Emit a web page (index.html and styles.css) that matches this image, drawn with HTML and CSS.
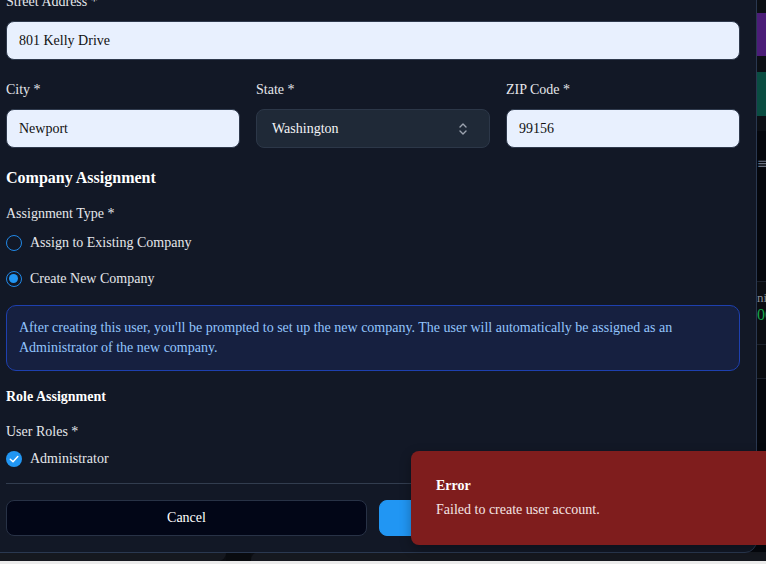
FILE: index.html
```html
<!DOCTYPE html>
<html lang="en">
<head>
<meta charset="utf-8">
<title>Create User</title>
<link rel="stylesheet" href="styles.css">
</head>
<body>
<div class="page">
  <div class="page-main">
    <div class="side">
      <div class="side-gap s1"></div>
      <div class="side-card purple"></div>
      <div class="side-gap s2"></div>
      <div class="side-card teal"></div>
      <div class="side-gap s3"></div>
      <div class="side-panel">
        <div class="side-menu">≡</div>
        <div class="side-row">
          <span class="side-label">ni</span>
          <span class="side-value">00</span>
        </div>
        <div class="side-row2"></div>
      </div>
    </div>
  </div>
  <div class="page-bottom">
    <div class="pb-a"></div>
    <div class="pb-b"></div>
    <div class="pb-c"></div>
  </div>
</div>

<div class="modal">
  <div class="field">
    <label class="label">Street Address *</label>
    <input class="input" type="text" value="801 Kelly Drive">
  </div>

  <div class="grid3">
    <div class="field">
      <label class="label">City *</label>
      <input class="input" type="text" value="Newport">
    </div>
    <div class="field">
      <label class="label">State *</label>
      <div class="select">
        <span>Washington</span>
        <svg class="chev" width="10" height="14" viewBox="0 0 10 14" fill="none" stroke="#9ca3af" stroke-width="1.4" stroke-linecap="round" stroke-linejoin="round"><path d="M2 5 L5 2 L8 5"/><path d="M2 9 L5 12 L8 9"/></svg>
      </div>
    </div>
    <div class="field">
      <label class="label">ZIP Code *</label>
      <input class="input" type="text" value="99156">
    </div>
  </div>

  <h3 class="section-title">Company Assignment</h3>
  <div class="label sub-label">Assignment Type *</div>
  <div class="option first"><span class="radio"></span><span>Assign to Existing Company</span></div>
  <div class="option second"><span class="radio checked"></span><span>Create New Company</span></div>

  <div class="info">After creating this user, you'll be prompted to set up the new company. The user will automatically be assigned as an Administrator of the new company.</div>

  <h4 class="section-title small">Role Assignment</h4>
  <div class="label sub-label2">User Roles *</div>
  <div class="option third">
    <span class="check"><svg width="16" height="16" viewBox="0 0 16 16" fill="none" stroke="#fff" stroke-width="1.5" stroke-linecap="round" stroke-linejoin="round"><path d="M4.3 8.3 L7 10.8 L11.8 5.6"/></svg></span>
    <span>Administrator</span>
  </div>

  <div class="divider"></div>

  <div class="actions">
    <button class="btn cancel">Cancel</button>
    <button class="btn primary">Create User</button>
  </div>
</div>

<div class="toast">
  <div class="toast-title">Error</div>
  <div class="toast-desc">Failed to create user account.</div>
</div>
</body>
</html>
```

FILE: styles.css
```css
* { box-sizing: border-box; }

html, body {
  margin: 0;
  padding: 0;
}

body {
  width: 766px;
  height: 564px;
  overflow: hidden;
  background: #ebebeb;
  font-family: "Liberation Serif", "Times New Roman", serif;
  font-size: 14px;
  line-height: 20px;
  position: relative;
}

/* background page */
.page {
  height: 561px;
  background: #05070d;
  display: flex;
  flex-direction: column;
}

.page-main {
  flex: 1;
  display: flex;
  justify-content: flex-end;
}

.side {
  width: 220px;
  display: flex;
  flex-direction: column;
}

.side-gap { background: #0c0f15; }
.s1 { height: 13px; }
.s2 { height: 16px; }
.s3 { height: 15px; }
.side-card { height: 43px; }
.purple { background: #4b1d78; }
.teal { background: #0a4d42; height: 44px; }

.side-panel {
  flex: 1;
  background: #05070d;
  display: flex;
  flex-direction: column;
  align-items: flex-end;
}

.side-menu {
  color: #6b7280;
  font-family: "DejaVu Sans", sans-serif;
  font-size: 14px;
  line-height: 20px;
  margin-top: 22px;
  width: 9px;
  overflow: hidden;
}

.side-row {
  margin-top: 108px;
  width: 100%;
  height: 64px;
  border-top: 1px solid #1c212b;
  border-bottom: 1px solid #1c212b;
  background: #0b0d12;
  display: flex;
  flex-direction: column;
  align-items: flex-start;
  padding-top: 8px;
  padding-left: 211px;
}

.side-label {
  color: #8a8f98;
  font-family: "Liberation Serif", serif;
  font-size: 13px;
  line-height: 16px;
  white-space: nowrap;
}

.side-value {
  color: #16a34a;
  font-family: "Liberation Serif", serif;
  font-size: 16px;
  line-height: 18px;
}

.side-row2 {
  width: 100%;
  height: 34px;
  border-bottom: 1px solid #1c212b;
  background: #0a0c10;
}

.page-bottom {
  height: 9px;
  display: flex;
  background: #0b0d12;
}

.pb-a { width: 226px; background: #15181f; border-radius: 0 0 8px 0; }
.pb-b { width: 25px; background: #090b0f; }
.pb-c { flex: 1; background: #15181f; border-radius: 8px 0 0 0; }

/* modal */
.modal {
  position: absolute;
  left: -20px;
  top: -30px;
  width: 777px;
  background: #121826;
  border: 1px solid #2a3850;
  border-radius: 12px;
  padding: 21px 16px 16px 25px;
  color: #e5e7eb;
}

.field {
  display: flex;
  flex-direction: column;
  gap: 9px;
}

.label {
  display: block;
  color: #e5e7eb;
  font-size: 14px;
  line-height: 20px;
}

.input {
  height: 39px;
  border: 1px solid #2f3a4d;
  border-radius: 8px;
  background: #e8f0fe;
  color: #111111;
  font-family: "Liberation Serif", "Times New Roman", serif;
  font-size: 14px;
  padding: 0 12px;
  outline: none;
  width: 100%;
}

.grid3 {
  display: grid;
  grid-template-columns: 1fr 1fr 1fr;
  gap: 16px;
  margin-top: 20px;
}

.select {
  height: 39px;
  border: 1px solid #2c3748;
  border-radius: 8px;
  background: #1f2937;
  color: #f3f4f6;
  display: flex;
  align-items: center;
  justify-content: space-between;
  padding: 0 21px 0 15px;
}

.chev { display: block; }

.section-title {
  margin: 18px 0 0;
  font-size: 16px;
  line-height: 24px;
  font-weight: bold;
  color: #ffffff;
}

.section-title.small {
  margin-top: 16px;
  font-size: 14px;
  line-height: 20px;
}

.sub-label { margin-top: 14px; }
.sub-label2 { margin-top: 15px; }

.option {
  display: flex;
  align-items: center;
  gap: 8px;
  height: 20px;
  color: #e5e7eb;
}

.option.first { margin-top: 9px; }
.option.second { margin-top: 16px; }
.option.third { margin-top: 7px; }

.radio {
  width: 16px;
  height: 16px;
  border-radius: 50%;
  border: 1.5px solid #2188e6;
  flex: none;
  position: relative;
}

.radio.checked::after {
  content: "";
  position: absolute;
  left: 2px;
  top: 2px;
  width: 9px;
  height: 9px;
  border-radius: 50%;
  background: #2196f3;
}

.check {
  width: 16px;
  height: 16px;
  border-radius: 50%;
  background: #2196f3;
  flex: none;
  display: block;
}

.check svg { display: block; }

.info {
  margin-top: 16px;
  border: 1px solid #1e40af;
  background: #162040;
  border-radius: 10px;
  padding: 12px;
  color: #93c5fd;
  font-size: 14px;
  line-height: 20px;
}

.divider {
  margin-top: 14px;
  height: 1px;
  background: #323d4f;
}

.actions {
  display: flex;
  gap: 12px;
  margin-top: 16px;
}

.btn {
  flex: 1;
  height: 36px;
  border-radius: 8px;
  font-family: "Liberation Serif", "Times New Roman", serif;
  font-size: 14px;
  color: #ffffff;
  cursor: pointer;
}

.btn.cancel {
  background: #020617;
  border: 1px solid #283246;
}

.btn.primary {
  background: #2196f3;
  border: 1px solid #2196f3;
}

/* toast */
.toast {
  position: absolute;
  left: 411px;
  top: 451px;
  width: 380px;
  height: 94px;
  background: #7f1d1d;
  border-radius: 8px;
  padding: 25px 25px 24px;
  color: #ffffff;
  box-shadow: 0 4px 12px rgba(0, 0, 0, 0.3);
}

.toast-title {
  font-weight: bold;
  font-size: 14px;
  line-height: 20px;
}

.toast-desc {
  margin-top: 4px;
  font-size: 14px;
  line-height: 20px;
  color: #f5e4e4;
}
```
